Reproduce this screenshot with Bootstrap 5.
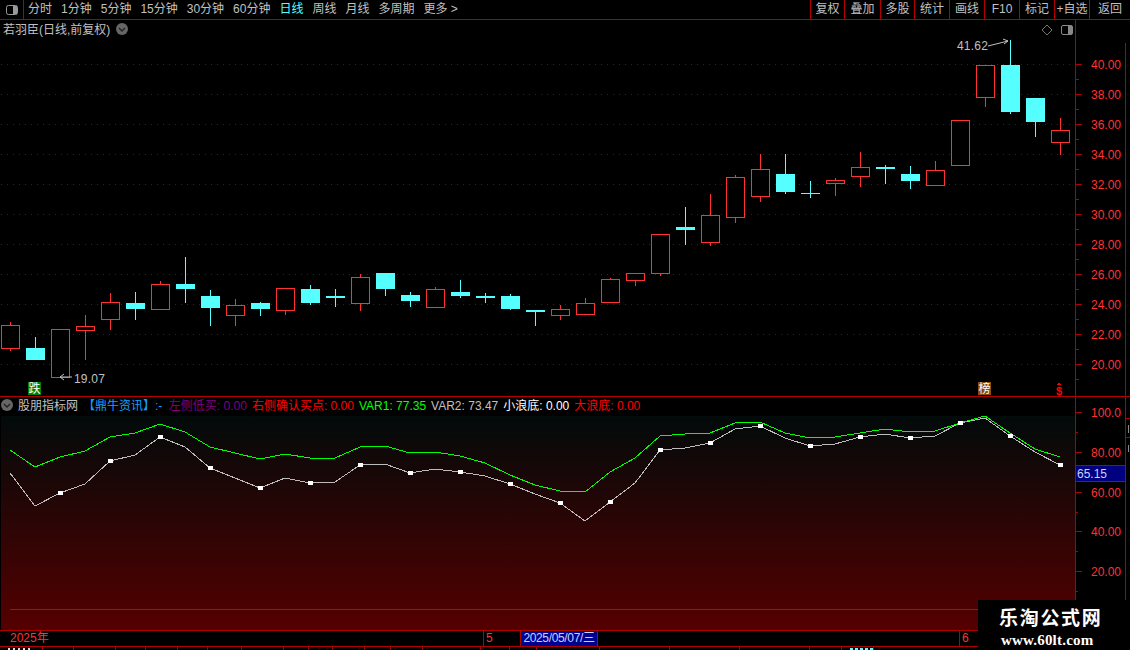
<!DOCTYPE html>
<html lang="zh">
<head>
<meta charset="utf-8">
<title>若羽臣 日线</title>
<link href="https://cdn.jsdelivr.net/npm/bootstrap@5.3.0/dist/css/bootstrap.min.css" rel="stylesheet">
<style>
html,body{background:#000;margin:0;height:100%;overflow:hidden}
body{width:1130px;height:650px;font:12px/1 "Liberation Sans","Noto Sans CJK SC",sans-serif;color:#c0c0c0;position:relative}
svg{display:block;font:12px "Liberation Sans","Noto Sans CJK SC",sans-serif}
.tool-bar{height:20px;border-bottom:1px solid #b00000;white-space:nowrap}
.tool-toggle{width:24px;height:19px;border-right:1px solid #b00000}
.tool-left{padding-left:4px;gap:9px;line-height:19px}
.tool-right>div{height:19px;line-height:19px;text-align:center;border-left:1px solid #b00000}
.tool-active{color:#55ffff}
.price-panel{height:377px;border-bottom:1px solid #b00000}
.ind-panel{height:233px}
.ind-head{height:19px;line-height:18px;gap:5px;padding-left:1px;white-space:pre}
.ind-plot{width:1075px;height:214px;background:linear-gradient(#020a0a,#550000);border-left:1px solid #000}
.time-bar{height:17px;border-top:1px solid #b00000;border-bottom:1px solid #b00000;line-height:15px;color:#ff3232;white-space:nowrap}
.time-cell{border-right:1px solid #b00000}
.time-date{width:78px;background:#000090;color:#c8d0ff;border:1px solid #b00000;border-width:0 1px;text-align:center;letter-spacing:-.35px}
.status-strip{height:3px;overflow:hidden}
.status-strip>div{border-right:1px solid #b00000;height:3px;flex:none;padding:1px 0 0 8px}
.strip-mark{height:2px;width:24px;background:repeating-linear-gradient(90deg,#ddd 0 2px,transparent 2px 5px)}
.strip-mark-cy{background:repeating-linear-gradient(90deg,#55ffff 0 3px,transparent 3px 5px)}
.logo-box{position:absolute;left:978px;top:600px;width:152px;height:50px;background:#000;color:#fff;font-weight:700}
.logo-name{font-size:19px;line-height:20px;padding:9px 0 0 21px;letter-spacing:1.7px}
.logo-url{font:700 15px/16px "Liberation Serif",serif;padding:3px 0 0 23px;letter-spacing:.2px}
.c-blue{color:#12a0ff;margin-right:1.5px}.c-purple{color:#800080}.c-red{color:#f00}.c-green{color:#0f0}.c-white{color:#fff}
</style>
</head>
<body>
<header class="tool-bar d-flex justify-content-between">
  <div class="d-flex">
    <div class="tool-toggle d-flex align-items-center justify-content-center">
      <svg width="14" height="12" viewBox="0 0 14 12"><rect x="1.5" y="1.5" width="11" height="9" rx="2" fill="none" stroke="#999"/><rect x="8" y="2" width="4" height="8" fill="#999"/></svg>
    </div>
    <nav class="tool-left d-flex">
      <span>分时</span><span>1分钟</span><span>5分钟</span><span>15分钟</span><span>30分钟</span><span>60分钟</span><span class="tool-active">日线</span><span>周线</span><span>月线</span><span>多周期</span><span>更多 &gt;</span>
    </nav>
  </div>
  <div class="tool-right d-flex">
    <div style="width:34px">复权</div><div style="width:36px">叠加</div><div style="width:34px">多股</div><div style="width:35px">统计</div><div style="width:35px">画线</div><div style="width:35px">F10</div><div style="width:35px">标记</div><div style="width:35px">+自选</div><div style="width:41px">返回</div>
  </div>
</header>

<section class="price-panel d-flex">
  <svg width="1075" height="376" viewBox="0 20 1075 376" id="priceSvg" shape-rendering="crispEdges">
    <g id="priceGrid"></g>
    <g id="candles"></g>
    <text x="3" y="34" fill="#c0c0c0" shape-rendering="auto">若羽臣(日线,前复权)</text>
    <circle cx="122" cy="29" r="6" fill="#666" shape-rendering="auto"/>
    <path d="M119 28l3 3 3-3" fill="none" stroke="#222" stroke-width="1.4" shape-rendering="auto"/>
    <path d="M1047 25l5 5-5 5-5-5z" fill="none" stroke="#777" shape-rendering="auto"/>
    <rect x="1061.5" y="25.5" width="11" height="9" rx="1.5" fill="none" stroke="#888" shape-rendering="auto"/><rect x="1068" y="26" width="4" height="8" fill="#888"/>
    <text x="957" y="50" fill="#c0c0c0" letter-spacing=".2">41.62</text>
    <path d="M988 46L1008 41M1003 39l5 2-4 3" fill="none" stroke="#c0c0c0" shape-rendering="auto"/>
    <path d="M60 377H72M64 374l-4 3 4 3" fill="none" stroke="#c0c0c0" shape-rendering="auto"/>
    <text x="74" y="383" fill="#c0c0c0" letter-spacing=".2">19.07</text>
    <rect x="28" y="382" width="13" height="13" fill="#008000"/>
    <text x="28.5" y="393" fill="#fff" font-size="12">跌</text>
    <rect x="978" y="382" width="13" height="13" fill="#8a4a0a"/>
    <text x="978.5" y="393" fill="#fff" font-size="12">榜</text>
    <text x="1056" y="395" fill="#f00" font-size="11" font-weight="700">$</text>
    <path d="M1059 382l-2 3h4z" fill="#f00"/>
  </svg>
  <svg width="55" height="376" viewBox="1075 20 55 376" id="priceAxis" shape-rendering="crispEdges"></svg>
</section>

<section class="ind-panel d-flex">
  <div>
    <div class="ind-head d-flex">
      <svg width="12" height="18" viewBox="0 0 12 18" class="flex-none"><circle cx="6" cy="8" r="6" fill="#666"/><path d="M3 7l3 3 3-3" fill="none" stroke="#222" stroke-width="1.4"/></svg>
      <span>股朋指标网</span>
      <span class="c-blue">【鼎牛资讯】:-</span>
      <span class="c-purple">左侧低买: 0.00</span>
      <span class="c-red">右侧确认买点: 0.00</span>
      <span class="c-green">VAR1: 77.35</span>
      <span>VAR2: 73.47</span>
      <span class="c-white">小浪底: 0.00</span>
      <span class="c-red">大浪底: 0.00</span>
    </div>
    <div class="ind-plot">
      <svg width="1074" height="214" viewBox="1 416 1074 214" id="indSvg"></svg>
    </div>
  </div>
  <svg width="55" height="233" viewBox="1075 397 55 233" id="indAxis" shape-rendering="crispEdges"></svg>
</section>

<footer>
  <div class="time-bar d-flex">
    <div class="time-cell" style="width:484px;padding-left:10px">2025年</div>
    <div style="width:36px;padding-left:2px">5</div>
    <div class="time-date">2025/05/07/三</div>
    <div class="time-cell" style="width:362px"></div>
    <div style="padding-left:2px">6</div>
  </div>
  <div class="status-strip d-flex">
    <div style="width:43px"><div class="strip-mark"></div></div><div style="width:31px"></div><div style="width:42px"></div><div style="width:30px"></div><div style="width:32px"></div><div style="width:30px"></div><div style="width:34px"></div><div style="width:42px"></div><div style="width:25px"></div><div style="width:24px"></div><div style="width:32px"></div><div style="width:26px"></div><div style="width:32px"></div><div style="width:58px"></div><div style="width:29px"></div><div style="width:27px"></div><div style="width:63px"></div><div style="width:70px"></div><div style="width:70px"></div><div style="width:70px"></div><div style="width:32px"></div><div style="width:32px"><div class="strip-mark strip-mark-cy"></div></div>
  </div>
</footer>

<div class="logo-box">
  <div class="logo-name">乐淘公式网</div>
  <div class="logo-url">www.60lt.com</div>
</div>

<script src="https://cdn.jsdelivr.net/npm/bootstrap@5.3.0/dist/js/bootstrap.bundle.min.js"></script>
<script>
var RED='#ff3232',CY='#55ffff',LINE='#b00000';
// [type, bodyTop, bodyBottom, wickTop, wickBottom]
var C=[['r',325,349,322,351],['c',348,360,337,360],['r',329,378,329,378],['r',326,331,315,360],['r',302,320,293,330],
['c',303,309,292,320],['r',284,310,281,310],['c',284,289,257,303],['c',296,308,290,326],['r',305,316,299,326],
['c',303,309,302,316],['r',288,311,288,315],['c',289,303,285,305],['c',296,298,289,307],['r',277,304,274,311],
['c',273,289,273,296],['c',295,301,292,307],['r',289,308,287,308],['c',292,296,280,298],['c',296,298,293,303],
['c',296,309,294,310],['c',310,312,310,326],['r',309,316,305,320],['r',303,315,298,315],['r',279,303,278,303],
['r',273,281,273,286],['r',234,274,234,276],['c',227,230,207,245],['r',215,243,194,246],['r',177,218,175,223],
['r',169,197,154,202],['c',174,192,154,194],['c',193,194,181,198],['r',180,184,178,196],['r',167,177,152,187],
['c',167,169,165,184],['c',174,181,166,189],['r',170,186,161,186],['r',120,166,120,166],['r',65,98,65,107],
['c',65,112,40,114],['c',98,122,98,137],['r',130,143,118,155]];
var h='';
C.forEach(function(d,i){
  var l=1+25*i,cx=l+9.5,t=d[1],b=d[2];
  if(d[0]=='c'){
    h+='<path d="M'+cx+' '+d[3]+'V'+d[4]+'" stroke="'+CY+'"/><rect x="'+l+'" y="'+t+'" width="19" height="'+(b-t)+'" fill="'+CY+'"/>';
  }else{
    h+='<path d="M'+cx+' '+d[3]+'V'+t+'M'+cx+' '+b+'V'+d[4]+'" stroke="'+RED+'"/><rect x="'+(l+.5)+'" y="'+(t+.5)+'" width="18" height="'+(b-t-1)+'" fill="#000" stroke="'+RED+'"/>';
  }
});
document.getElementById('candles').innerHTML=h;

var g='',a='';
a+='<path d="M1075.5 20V396M1125.5 43V396" stroke="'+LINE+'"/>';
for(var k=0;k<11;k++){
  var y=Math.round(64+k*29.97)+.5,v=(40-2*k).toFixed(2);
  g+='<path d="M1 '+y+'H1075" stroke="#8a0000" stroke-dasharray="1 5"/>';
  a+='<path d="M1075 '+y+'H1082" stroke="'+LINE+'"/><text x="1091" y="'+(y+4.5)+'" fill="'+RED+'" shape-rendering="auto">'+v+'</text>';
  a+='<path d="M1075 '+(y+15)+'H1079" stroke="'+LINE+'"/>';
}
document.getElementById('priceGrid').innerHTML=g;
document.getElementById('priceAxis').innerHTML=a;

var b='<path d="M1075.5 397V630M1125.5 397V630M1126 418.5H1130M1126 437.5H1130" stroke="'+LINE+'"/><path d="M1128.5 425V433M1128.5 445V452" stroke="#888"/>';
['100.0','80.00','60.00','40.00','20.00'].forEach(function(t,i){
  var y=Math.round(412+i*39.8)+.5;
  b+='<path d="M1075 '+y+'H1082" stroke="'+LINE+'"/><path d="M1075 '+(y+20)+'H1078" stroke="'+LINE+'"/><text x="1091" y="'+(y+4.5)+'" fill="'+RED+'" shape-rendering="auto">'+t+'</text>';
});
b+='<rect x="1076" y="466" width="49" height="15" fill="#000080"/><path d="M1076 465.5H1125M1076 481.5H1125" stroke="'+LINE+'"/><text x="1077" y="478" fill="#c8d0ff" shape-rendering="auto">65.15</text>';
document.getElementById('indAxis').innerHTML=b;

var W=[473,506,493,484,461,455,437,447,468,478,488,478,483,482,465,464,473,469,472,476,484,494,503,521,502,483,450,448,443,429,426,438,446,444,437,434,438,436,423,418,436,452,465];
var G=[450,467,457,451,437,433,424,432,447,453,459,454,458,458,447,446,453,452,456,463,475,485,491,492,472,458,436,434,433,423,422,433,438,437,433,429,432,431,423,416,433,449,457];
function pts(A){return A.map(function(y,i){return (10+25*i)+','+y;}).join(' ');}
var s='<path d="M10 609.5H1075" stroke="#cc0000" shape-rendering="crispEdges"/>';
s+='<polyline points="'+pts(W)+'" fill="none" stroke="#bcbcbc" shape-rendering="crispEdges"/>';
s+='<polyline points="'+pts(G)+'" fill="none" stroke="#00ff00" shape-rendering="crispEdges"/>';
W.forEach(function(y,i){ if(i%2==0&&i>=2){ s+='<rect x="'+(8+25*i)+'" y="'+(y-2)+'" width="5" height="4" fill="#fff" shape-rendering="crispEdges"/>'; }});
document.getElementById('indSvg').innerHTML=s;
</script>
</body>
</html>
